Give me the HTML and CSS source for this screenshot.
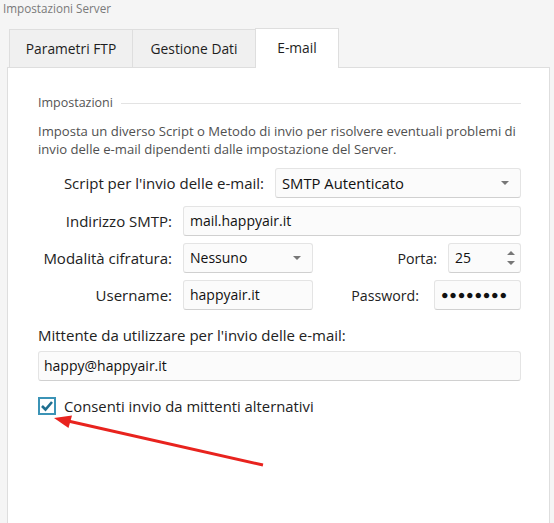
FILE: index.html
```html
<!DOCTYPE html>
<html>
<head>
    <title>Impostazioni Server</title>
    <meta charset="utf-8">
    <link rel="stylesheet" href="styles.css">
</head>

<body>
    <div class="window">
        <div class="title">Impostazioni Server</div>

        <div class="tabs">
            <div class="tab">Parametri FTP</div>
            <div class="tab">Gestione Dati</div>
            <div class="tab active">E-mail</div>
        </div>

        <div class="panel">
            <div class="group-title">
                <span>Impostazioni</span>
                <div class="group-line"></div>
            </div>

            <div class="description">
                Imposta un diverso Script o Metodo di invio per risolvere eventuali problemi di<br>
                invio delle e-mail dipendenti dalle impostazione del Server.
            </div>

            <div class="form">
                <div class="row row-script">
                    <label class="label">Script per l'invio delle e-mail:</label>
                    <div class="control select select-script">
                        <span>SMTP Autenticato</span>
                        <svg class="caret" width="8" height="5" viewBox="0 0 8 5"><path d="M0 0 L8 0 L4 4 Z" fill="#777"/></svg>
                    </div>
                </div>

                <div class="row">
                    <label class="label label-col">Indirizzo SMTP:</label>
                    <div class="control grow">mail.happyair.it</div>
                </div>

                <div class="row">
                    <label class="label label-col">Modalità cifratura:</label>
                    <div class="control select small">
                        <span>Nessuno</span>
                        <svg class="caret" width="8" height="5" viewBox="0 0 8 5"><path d="M0 0 L8 0 L4 4 Z" fill="#777"/></svg>
                    </div>
                    <label class="label side-label">Porta:</label>
                    <div class="control spin">
                        <span>25</span>
                        <svg class="spinner" width="8" height="16" viewBox="0 0 8 16"><path d="M0 5 L8 5 L4 1 Z M0 11 L8 11 L4 15 Z" fill="#777"/></svg>
                    </div>
                </div>

                <div class="row">
                    <label class="label label-col">Username:</label>
                    <div class="control small">happyair.it</div>
                    <label class="label side-label pwd-label">Password:</label>
                    <div class="control password">&#9679;&#9679;&#9679;&#9679;&#9679;&#9679;&#9679;&#9679;</div>
                </div>
            </div>

            <div class="sender">
                <label class="label">Mittente da utilizzare per l'invio delle e-mail:</label>
                <div class="control sender-input">happy@happyair.it</div>
            </div>

            <div class="check-row">
                <span class="checkbox">
                    <svg width="14" height="14" viewBox="0 0 14 14"><path d="M2 7 L5.5 10.5 L12 3" fill="none" stroke="#1f6f90" stroke-width="2.6"/></svg>
                </span>
                <span class="check-label">Consenti invio da mittenti alternativi</span>
            </div>
        </div>
    </div>

    <svg class="arrow" width="554" height="523" viewBox="0 0 554 523">
        <line x1="263" y1="465" x2="68" y2="421" stroke="#e8231e" stroke-width="3"/>
        <path d="M54 418 L72 415.5 L68.5 428 Z" fill="#e8231e"/>
    </svg>
</body>

</html>
```

FILE: styles.css
```css
body {
    margin: 0;
    font-family: 'Open Sans', sans-serif;
    color: #222;
    background-color: #f5f5f5;
    position: relative;
    height: 523px;
    overflow: hidden;
}

.window {
    padding-left: 7px;
    padding-right: 4px;
}

.title {
    height: 28px;
    line-height: 16px;
    margin-left: -4px;
    font-size: 11.7px;
    color: #7a7a7a;
}

.tabs {
    display: flex;
    align-items: flex-end;
    margin-left: 2px;
    height: 39px;
}

.tab {
    width: 123px;
    height: 38px;
    box-sizing: border-box;
    border: 1px solid #dedede;
    border-bottom: none;
    border-right: none;
    background-color: #f0f0f0;
    font-size: 13.8px;
    line-height: 37px;
    text-align: center;
    color: #1e1e1e;
}

.tab.active {
    width: 84px;
    height: 40px;
    margin-bottom: -1px;
    background-color: #fff;
    border-right: 1px solid #dedede;
    line-height: 37px;
    position: relative;
}

.panel {
    background-color: #fff;
    border: 1px solid #dedede;
    height: 480px;
    box-sizing: border-box;
    padding: 27px 28px 0 30px;
}

.group-title {
    display: flex;
    align-items: center;
    gap: 8px;
    font-size: 12.5px;
    line-height: 16px;
    color: #555;
}

.group-line {
    flex: 1;
    border-top: 1px solid #e3e3e3;
}

.description {
    margin-top: 11px;
    font-size: 13.1px;
    line-height: 18px;
    color: #505050;
}

.form {
    margin-top: 10px;
    display: flex;
    flex-direction: column;
    gap: 7px;
}

.row {
    display: flex;
    align-items: center;
    gap: 11px;
}

.row-script {
    justify-content: flex-end;
    margin-bottom: 1px;
}

.label {
    font-size: 15px;
    color: #222;
}

.label-col {
    width: 134px;
    text-align: right;
    white-space: nowrap;
}

.side-label {
    flex: 1;
    text-align: right;
    font-size: 14.2px;
}

.pwd-label {
    margin-right: 4px;
}

.control {
    height: 30px;
    box-sizing: border-box;
    border: 1px solid #e4e4e4;
    border-bottom-color: #d0d0d0;
    border-radius: 3px;
    background-color: #fbfbfb;
    padding: 0 6px;
    font-size: 14px;
    line-height: 28px;
    color: #111;
    display: flex;
    align-items: center;
}

.grow {
    flex: 1;
}

.select {
    justify-content: space-between;
    padding-right: 11px;
}

.select-script {
    width: 246px;
    font-size: 14.8px;
}

.small {
    width: 130px;
}

.spin {
    width: 73px;
    justify-content: space-between;
    padding-right: 5px;
}

.password {
    width: 87px;
    font-size: 12.5px;
    letter-spacing: 0.8px;
    padding-left: 6px;
}

.sender {
    margin-top: 15px;
}

.sender .label {
    display: block;
    line-height: 20px;
}

.sender .control {
    margin-top: 6px;
}

.sender-input {
    padding-left: 5px;
}

.check-row {
    display: flex;
    align-items: center;
    gap: 8px;
    margin-top: 15px;
}

.checkbox {
    width: 18px;
    height: 18px;
    box-sizing: border-box;
    border: 2px solid #3b93b6;
    background-color: #fff;
    display: flex;
    align-items: center;
    justify-content: center;
}

.check-label {
    font-size: 14.8px;
    color: #222;
}

.arrow {
    position: absolute;
    left: 0;
    top: 0;
    pointer-events: none;
}
```
